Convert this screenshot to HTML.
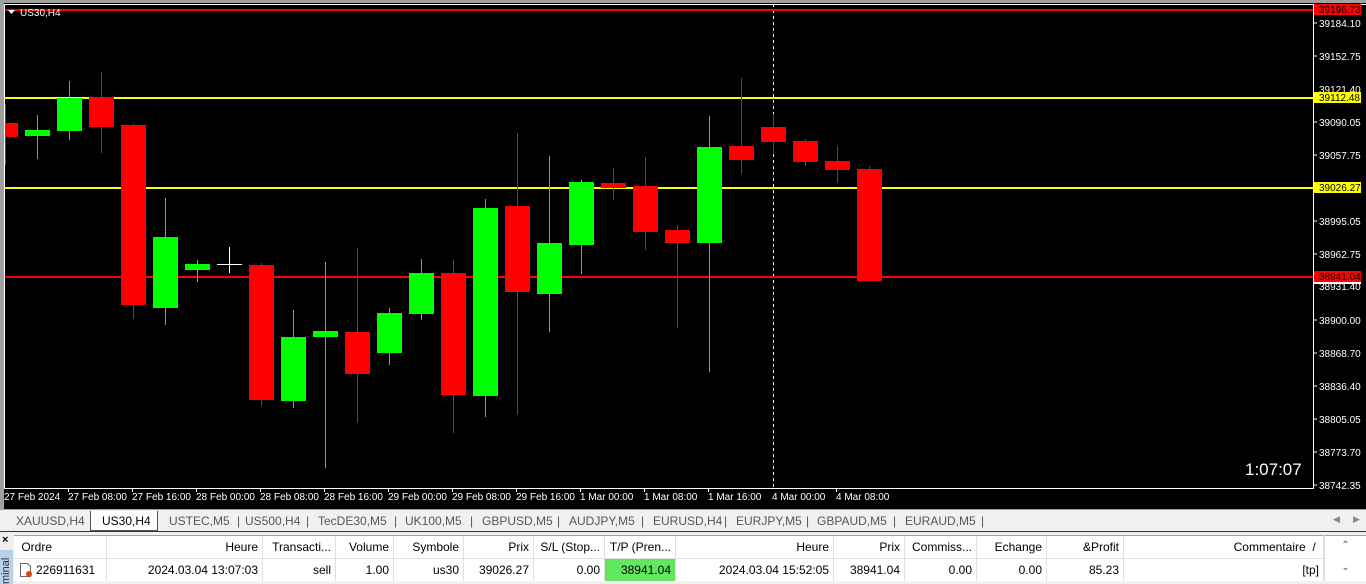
<!DOCTYPE html>
<html><head><meta charset="utf-8"><style>
*{margin:0;padding:0;box-sizing:border-box}
body{width:1366px;height:584px;overflow:hidden;background:#f0f0f0;font-family:"Liberation Sans",sans-serif;position:relative}
.abs{position:absolute}
.tabs{position:absolute;left:0;top:509px;width:1366px;height:22px;background:#f0f0f0;border-top:1px solid #a0a0a0;font-size:12px;color:#555}
.tab{position:absolute;top:4px}
.tbl{position:absolute;left:14px;top:535px;width:1352px;font-size:12px;color:#000}
.c{position:absolute;height:22px;line-height:22px;padding:0 4px;border-right:1px solid #e0e0e0;white-space:nowrap;overflow:hidden}
</style></head><body>
<div class="abs" style="left:0;top:0;width:1366px;height:509px;background:#000"></div>
<div class="abs" style="left:0;top:0;width:1366px;height:3px;background:#a0a0a0"></div>
<div class="abs" style="left:0;top:0;width:4px;height:509px;background:#a0a0a0"></div>
<svg class="abs" style="left:0;top:0" width="1366" height="509">
<g stroke="#fff" stroke-width="1" fill="none">
<line x1="4.5" y1="4" x2="4.5" y2="489"/>
<line x1="1313.5" y1="4" x2="1313.5" y2="489"/>
<line x1="4" y1="488.5" x2="1314" y2="488.5"/>
<line x1="4" y1="4.5" x2="1366" y2="4.5"/>
<line x1="773.5" y1="4" x2="773.5" y2="488" stroke-dasharray="3,3"/>
</g>
<g stroke-width="2">
<line x1="5" y1="10" x2="1313" y2="10" stroke="#f00"/>
<line x1="5" y1="98" x2="1313" y2="98" stroke="#ff0"/>
<line x1="5" y1="188" x2="1313" y2="188" stroke="#ff0"/>
<line x1="5" y1="277" x2="1313" y2="277" stroke="#f00"/>
</g>
<g stroke="#f00" stroke-width="1">
<line x1="5.5" y1="104" x2="5.5" y2="165"/><line x1="101.5" y1="72" x2="101.5" y2="153"/><line x1="133.5" y1="124" x2="133.5" y2="319"/>
<line x1="261.5" y1="263" x2="261.5" y2="406"/><line x1="357.5" y1="248" x2="357.5" y2="423"/><line x1="453.5" y1="260" x2="453.5" y2="433"/>
<line x1="517.5" y1="133" x2="517.5" y2="415"/><line x1="613.5" y1="168" x2="613.5" y2="200"/><line x1="645.5" y1="157" x2="645.5" y2="250"/>
<line x1="677.5" y1="225" x2="677.5" y2="328"/><line x1="741.5" y1="78" x2="741.5" y2="174"/><line x1="773.5" y1="114" x2="773.5" y2="153"/>
<line x1="805.5" y1="139" x2="805.5" y2="166"/><line x1="837.5" y1="146" x2="837.5" y2="183"/><line x1="869.5" y1="166" x2="869.5" y2="281"/>
</g>
<g stroke="#0f0" stroke-width="1">
<line x1="37.5" y1="115" x2="37.5" y2="159"/><line x1="69.5" y1="81" x2="69.5" y2="140"/><line x1="165.5" y1="198" x2="165.5" y2="325"/>
<line x1="197.5" y1="260" x2="197.5" y2="282"/><line x1="293.5" y1="310" x2="293.5" y2="408"/><line x1="325.5" y1="262" x2="325.5" y2="468"/>
<line x1="389.5" y1="308" x2="389.5" y2="365"/><line x1="421.5" y1="259" x2="421.5" y2="320"/><line x1="485.5" y1="199" x2="485.5" y2="417"/>
<line x1="549.5" y1="156" x2="549.5" y2="332"/><line x1="581.5" y1="180" x2="581.5" y2="274"/><line x1="709.5" y1="116" x2="709.5" y2="372"/>
</g>
<g fill="#f00">
<rect x="5" y="123" width="13" height="14"/><rect x="89" y="97" width="25" height="30"/><rect x="121" y="125" width="25" height="180"/>
<rect x="249" y="265" width="25" height="135"/><rect x="345" y="332" width="25" height="42"/><rect x="441" y="273" width="25" height="122"/>
<rect x="505" y="206" width="25" height="86"/><rect x="601" y="183" width="25" height="5"/><rect x="633" y="186" width="25" height="46"/>
<rect x="665" y="230" width="25" height="13"/><rect x="729" y="146" width="25" height="14"/><rect x="761" y="127" width="25" height="15"/>
<rect x="793" y="141" width="25" height="21"/><rect x="825" y="161" width="25" height="9"/><rect x="857" y="169" width="25" height="112"/>
</g>
<g fill="#0f0">
<rect x="25" y="130" width="25" height="6"/><rect x="57" y="98" width="25" height="33"/><rect x="153" y="237" width="25" height="71"/>
<rect x="185" y="264" width="25" height="6"/><rect x="281" y="337" width="25" height="64"/><rect x="313" y="331" width="25" height="6"/>
<rect x="377" y="313" width="25" height="40"/><rect x="409" y="273" width="25" height="41"/><rect x="473" y="208" width="25" height="188"/>
<rect x="537" y="243" width="25" height="51"/><rect x="569" y="182" width="25" height="63"/><rect x="697" y="147" width="25" height="96"/>
</g>
<g stroke="#fff"><line x1="217" y1="264.5" x2="242" y2="264.5"/><line x1="229.5" y1="247" x2="229.5" y2="273"/></g>
<polygon points="8,10 15,10 11.5,14" fill="#fff"/>
<text x="20" y="16" fill="#fff" font-size="10" font-family="Liberation Sans">US30,H4</text>
<text x="1245" y="475" fill="#fff" font-size="17" font-family="Liberation Sans">1:07:07</text>
<g fill="#fff" font-size="10" font-family="Liberation Sans">
<text x="1319" y="27">39184.10</text><text x="1319" y="60">39152.75</text><text x="1319" y="93">39121.40</text>
<text x="1319" y="126">39090.05</text><text x="1319" y="159">39057.75</text><text x="1319" y="225">38995.05</text>
<text x="1319" y="258">38962.75</text><text x="1319" y="290">38931.40</text><text x="1319" y="324">38900.00</text>
<text x="1319" y="357">38868.70</text><text x="1319" y="390">38836.40</text><text x="1319" y="423">38805.05</text>
<text x="1319" y="456">38773.70</text><text x="1319" y="489">38742.35</text>
</g>
<g stroke="#fff"><line x1="1313" y1="23" x2="1317" y2="23"/><line x1="1313" y1="56" x2="1317" y2="56"/><line x1="1313" y1="122" x2="1317" y2="122"/><line x1="1313" y1="155" x2="1317" y2="155"/><line x1="1313" y1="221" x2="1317" y2="221"/><line x1="1313" y1="254" x2="1317" y2="254"/><line x1="1313" y1="320" x2="1317" y2="320"/><line x1="1313" y1="353" x2="1317" y2="353"/><line x1="1313" y1="386" x2="1317" y2="386"/><line x1="1313" y1="419" x2="1317" y2="419"/><line x1="1313" y1="452" x2="1317" y2="452"/><line x1="1313" y1="485" x2="1317" y2="485"/></g>
<rect x="1314" y="4" width="47" height="11" fill="#f00"/><text x="1319" y="13" font-size="10" fill="#000" font-family="Liberation Sans">39196.73</text>
<rect x="1314" y="92" width="47" height="11" fill="#ff0"/><text x="1319" y="101" font-size="10" fill="#000" font-family="Liberation Sans">39112.48</text>
<rect x="1314" y="182" width="47" height="11" fill="#ff0"/><text x="1319" y="191" font-size="10" fill="#000" font-family="Liberation Sans">39026.27</text>
<rect x="1314" y="271" width="47" height="11" fill="#f00"/><text x="1319" y="280" font-size="10" fill="#000" font-family="Liberation Sans">38941.04</text>
<rect x="1314" y="282" width="47" height="2" fill="#fff"/>
<g fill="#fff" font-size="10" font-family="Liberation Sans">
<text x="4" y="500">27 Feb 2024</text><text x="68" y="500">27 Feb 08:00</text><text x="132" y="500">27 Feb 16:00</text>
<text x="196" y="500">28 Feb 00:00</text><text x="260" y="500">28 Feb 08:00</text><text x="324" y="500">28 Feb 16:00</text>
<text x="388" y="500">29 Feb 00:00</text><text x="452" y="500">29 Feb 08:00</text><text x="516" y="500">29 Feb 16:00</text>
<text x="580" y="500">1 Mar 00:00</text><text x="644" y="500">1 Mar 08:00</text><text x="708" y="500">1 Mar 16:00</text>
<text x="772" y="500">4 Mar 00:00</text><text x="836" y="500">4 Mar 08:00</text>
</g>
<g stroke="#fff"><line x1="68.5" y1="488" x2="68.5" y2="492"/><line x1="132.5" y1="488" x2="132.5" y2="492"/><line x1="196.5" y1="488" x2="196.5" y2="492"/><line x1="260.5" y1="488" x2="260.5" y2="492"/><line x1="324.5" y1="488" x2="324.5" y2="492"/><line x1="388.5" y1="488" x2="388.5" y2="492"/><line x1="452.5" y1="488" x2="452.5" y2="492"/><line x1="516.5" y1="488" x2="516.5" y2="492"/><line x1="580.5" y1="488" x2="580.5" y2="492"/><line x1="644.5" y1="488" x2="644.5" y2="492"/><line x1="708.5" y1="488" x2="708.5" y2="492"/><line x1="836.5" y1="488" x2="836.5" y2="492"/></g>
</svg>
<div class="tabs">
<div class="abs" style="left:90px;top:1px;width:68px;height:20px;background:#fff;border:1px solid #555;border-top:none"></div>
<span class="tab" style="left:16px">XAUUSD,H4</span>
<span class="tab" style="left:102px;color:#000">US30,H4</span>
<span class="tab" style="left:169px">USTEC,M5</span><span class="tab" style="left:237px">|</span>
<span class="tab" style="left:245px">US500,H4</span><span class="tab" style="left:306px">|</span>
<span class="tab" style="left:318px">TecDE30,M5</span><span class="tab" style="left:394px">|</span>
<span class="tab" style="left:405px">UK100,M5</span><span class="tab" style="left:470px">|</span>
<span class="tab" style="left:482px">GBPUSD,M5</span><span class="tab" style="left:557px">|</span>
<span class="tab" style="left:569px">AUDJPY,M5</span><span class="tab" style="left:641px">|</span>
<span class="tab" style="left:653px">EURUSD,H4</span><span class="tab" style="left:724px">|</span>
<span class="tab" style="left:736px">EURJPY,M5</span><span class="tab" style="left:806px">|</span>
<span class="tab" style="left:817px">GBPAUD,M5</span><span class="tab" style="left:893px">|</span>
<span class="tab" style="left:905px">EURAUD,M5</span><span class="tab" style="left:981px">|</span>
<span class="tab" style="left:1333px;font-size:9px;color:#888">&#9664;</span><span class="tab" style="left:1353px;font-size:9px;color:#888">&#9654;</span>
</div>
<div class="abs" style="left:0;top:531px;width:1366px;height:1px;background:#333"></div>
<div class="abs" style="left:2px;top:534px;font-size:11px;font-weight:bold">×</div>
<div class="abs" style="left:0;top:550px;width:13px;height:34px;background:#b9d1ea"></div>
<div class="abs" style="left:0;top:584px;font-size:11px;color:#333;transform:rotate(-90deg);transform-origin:0 0;width:40px">minal</div>
<div class="abs" style="left:14px;top:535px;width:1352px;height:46px;background:#fff;border-top:1px solid #a0a0a0"></div>
<div class="tbl">
<div class="c" style="left:0;width:93px;top:1px">&nbsp;Ordre</div>
<div class="c" style="left:93px;width:156px;top:1px;text-align:right">Heure</div>
<div class="c" style="left:249px;width:73px;top:1px;text-align:right">Transacti...</div>
<div class="c" style="left:322px;width:58px;top:1px;text-align:right">Volume</div>
<div class="c" style="left:380px;width:70px;top:1px;text-align:right">Symbole</div>
<div class="c" style="left:450px;width:70px;top:1px;text-align:right">Prix</div>
<div class="c" style="left:520px;width:71px;top:1px;text-align:right">S/L (Stop...</div>
<div class="c" style="left:591px;width:71px;top:1px;text-align:right">T/P (Pren...</div>
<div class="c" style="left:662px;width:158px;top:1px;text-align:right">Heure</div>
<div class="c" style="left:820px;width:71px;top:1px;text-align:right">Prix</div>
<div class="c" style="left:891px;width:72px;top:1px;text-align:right">Commiss...</div>
<div class="c" style="left:963px;width:70px;top:1px;text-align:right">Echange</div>
<div class="c" style="left:1033px;width:77px;top:1px;text-align:right">&amp;Profit</div>
<div class="c" style="left:1110px;width:200px;top:1px;text-align:right">Commentaire &nbsp;/&nbsp;</div>
<div class="abs" style="left:0;top:23px;width:1310px;height:1px;background:#e0e0e0"></div>
<div class="c" style="left:0;width:93px;top:24px;padding-left:22px">226911631</div>
<div class="c" style="left:93px;width:156px;top:24px;text-align:right">2024.03.04 13:07:03</div>
<div class="c" style="left:249px;width:73px;top:24px;text-align:right">sell</div>
<div class="c" style="left:322px;width:58px;top:24px;text-align:right">1.00</div>
<div class="c" style="left:380px;width:70px;top:24px;text-align:right">us30</div>
<div class="c" style="left:450px;width:70px;top:24px;text-align:right">39026.27</div>
<div class="c" style="left:520px;width:71px;top:24px;text-align:right">0.00</div>
<div class="c" style="left:591px;width:71px;top:24px;text-align:right;background:#60e860">38941.04</div>
<div class="c" style="left:662px;width:158px;top:24px;text-align:right">2024.03.04 15:52:05</div>
<div class="c" style="left:820px;width:71px;top:24px;text-align:right">38941.04</div>
<div class="c" style="left:891px;width:72px;top:24px;text-align:right">0.00</div>
<div class="c" style="left:963px;width:70px;top:24px;text-align:right">0.00</div>
<div class="c" style="left:1033px;width:77px;top:24px;text-align:right">85.23</div>
<div class="c" style="left:1110px;width:200px;top:24px;text-align:right">[tp]</div>
<div class="abs" style="left:1310px;top:0;width:42px;height:46px;border-left:1px solid #ddd;font-size:10px;color:#555;text-align:center;line-height:22px">&#8963;<br>&#8964;</div>
</div>
<svg class="abs" style="left:19px;top:562px" width="14" height="16"><path d="M1.5 1.5h7l3 3v10h-10z" fill="#fff" stroke="#666"/><circle cx="10" cy="12" r="3" fill="#e04010"/></svg>
</body></html>
